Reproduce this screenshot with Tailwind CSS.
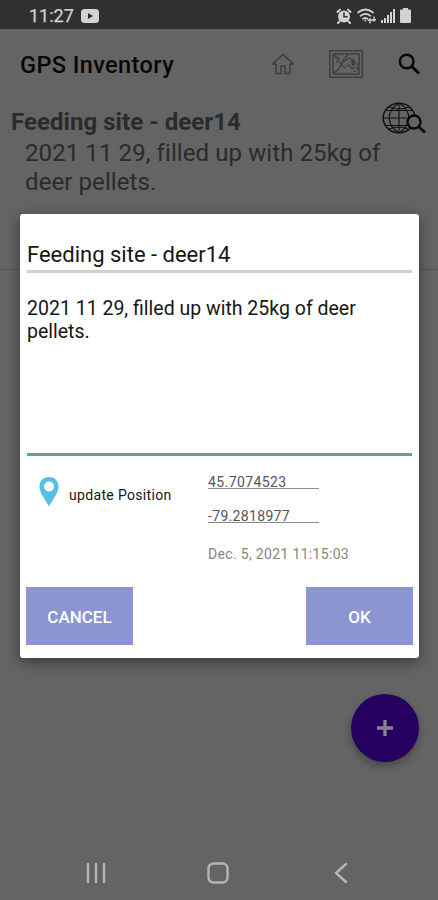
<!DOCTYPE html>
<html lang="en">
<head>
<meta charset="utf-8">
<title>GPS Inventory</title>
<script src="https://cdn.jsdelivr.net/npm/@tailwindcss/browser@4"></script>
</head>
<body class="bg-[#646464]">
<div class="relative flex h-[900px] w-[438px] flex-col overflow-hidden bg-[#646464] font-['Roboto',sans-serif]">
  <!-- Status bar -->
  <header class="flex h-[29px] shrink-0 items-center bg-[#303030] pt-[2px] pr-[27px] pl-[29px] text-[#d2d2d2]">
    <span class="w-[46px] text-[18px] leading-none font-normal whitespace-nowrap [-webkit-text-stroke:0.25px_currentColor]">11:27</span>
    <svg class="ml-[6px]" width="18" height="14" viewBox="0 0 18 14"><rect width="18" height="14" rx="3.5" fill="currentColor"/><path d="M7 4l5 3-5 3z" fill="#303030"/></svg>
    <div class="ml-auto flex items-center gap-[5px]">
      <svg width="16" height="16" viewBox="0 0 16 16" fill="none" stroke="currentColor" stroke-linecap="round"><circle cx="8" cy="8.5" r="6" fill="currentColor" stroke="none"/><path d="M1.500 4l2.500-2.400M14.500 4L12 1.600M3.500 13.500L2 15M12.500 13.500L14 15" stroke-width="2"/><path d="M8 5v3.700h3" stroke="#303030" stroke-width="1.500"/></svg>
      <svg width="19" height="16" viewBox="0 0 19 16" fill="none" stroke="currentColor" stroke-linecap="round" stroke-width="1.700"><path d="M1 4.500q7.500-6 15 0M3.500 7.800q5-4 10 0M6 10.800q2.500-2 4.500 0"/><circle cx="8.300" cy="12.500" r="1" fill="currentColor" stroke="none"/><path d="M13 15v-4m-1.500 1.500L13 11l1.500 1.500M17 9v4m-1.500-1.500L17 13l1.500-1.500" stroke-width="1.300"/></svg>
      <svg width="14" height="15" viewBox="0 0 14 15" fill="currentColor"><path d="M0 12h2v3H0zM3 10h2v5H3zM6 7h2v8H6zM9 4h2v11H9zM12 1h2v14h-2z"/></svg>
      <svg width="11" height="15" viewBox="0 0 11 15" fill="currentColor"><path d="M3 0h5v1.500h2q1 0 1 1V14q0 1-1 1H1q-1 0-1-1V2.500q0-1 1-1h2z"/></svg>
    </div>
  </header>

  <!-- App bar -->
  <nav class="flex h-[70px] shrink-0 items-center pr-[17px] pl-[20px]">
    <h1 class="pt-[3px] text-[23.5px] leading-none font-medium tracking-[0.4px] whitespace-nowrap text-[#080808]">GPS Inventory</h1>
    <div class="ml-auto flex items-center">
      <svg width="24" height="22" viewBox="0 0 24 22" fill="none" stroke="#3b3b3b" stroke-width="1.500" stroke-linejoin="round"><path d="M1.500 11L12 1.500 22.500 11H19v9.500h-5V13h-4v7.500H5V11z"/></svg>
      <svg class="ml-[34px]" width="34" height="28" viewBox="0 0 34 28" fill="none" stroke="#3b3b3b"><rect x=".75" y=".75" width="32.500" height="26.500" stroke-width="1.300"/><rect x="4" y="4" width="26" height="20" stroke-width="1.400"/><path d="M5 23q6-4 8-10t6-8M6 7l4 2-3 4M10 12l6 6M14 12l4-3 4-1M17 16l3-1 3 4 3-2M22 9l3 1 3 5" stroke-width="1.200"/><path d="M5 5l3 1-1 2zM22 9h2l2 6-3 1zM24 22l2-2 1 2zM27 18l2-2v5z" fill="#3b3b3b" stroke="none"/></svg>
      <svg class="ml-[35px]" width="23" height="22" viewBox="0 0 23 22" fill="none" stroke="#080808" stroke-width="2.400"><circle cx="8.700" cy="8.500" r="6.800"/><path d="M13.500 13.200l7.500 7.300" stroke-width="3"/></svg>
    </div>
  </nav>

  <!-- Inventory list -->
  <main class="relative h-[171px] shrink-0 border-b border-[#555] pt-[8px] pl-[11px] text-[#2b2b2b]">
    <h2 class="pt-px text-[24px] leading-[28px] font-bold tracking-[0.05px] whitespace-nowrap">Feeding site - deer14</h2>
    <p class="w-[380px] pt-[3px] pl-[14px] text-[24px] leading-[29px] tracking-[0.09px] whitespace-nowrap">2021 11 29, filled up with 25kg of<br>deer pellets.</p>
    <svg class="absolute top-[3px] right-[11px]" width="45" height="33" viewBox="0 0 45 33" fill="none" stroke="#111"><ellipse cx="17" cy="16" rx="15.800" ry="14.800" stroke-width="1.500"/><path d="M17 1v30M1 16h24M4 8.500h26M4 23.500h22M7 5q10 4 20 0M7 27q10-4 19 0" stroke-width="1.100"/><path d="M17 1C4 9 4 23 17 31M17 1c13 8 13 22 0 30" stroke-width="1.200"/><circle cx="32" cy="20" r="6.500" fill="#646464" stroke="#0c0c0c" stroke-width="2.400"/><path d="M36.500 24.500l6.500 6" stroke="#0c0c0c" stroke-width="2.600"/></svg>
  </main>

  <button class="absolute top-[694px] left-[351px] flex size-[68px] items-center justify-center rounded-full bg-[#250061] shadow-[0_4px_8px_rgba(0,0,0,0.3)]" aria-label="Add">
    <svg width="16" height="16" viewBox="0 0 16 16"><path d="M8 0v16M0 8h16" stroke="#858390" stroke-width="3.400"/></svg>
  </button>

  <!-- System navigation -->
  <footer class="mt-auto flex h-[55px] items-center pr-[90px] pl-[86px]">
    <svg width="20" height="22" viewBox="0 0 20 22" stroke="#b5b5b5" stroke-width="2.400" stroke-linecap="round"><path d="M2 2v18M10 2v18M18 2v18"/></svg>
    <svg class="ml-[101px]" width="22" height="22" viewBox="0 0 22 22" fill="none" stroke="#b5b5b5" stroke-width="2.400"><rect x="1.500" y="1.500" width="19" height="19" rx="5"/></svg>
    <svg class="ml-auto" width="14" height="22" viewBox="0 0 14 22" fill="none" stroke="#b5b5b5" stroke-width="2.400" stroke-linecap="round"><path d="M12 2L2 11l10 9"/></svg>
  </footer>

  <!-- Edit dialog -->
  <section class="absolute top-[214px] left-[20px] flex h-[444px] w-[399px] flex-col rounded-[3px] bg-white pr-[7px] pl-[7px] text-[#161616] shadow-[0_4px_14px_rgba(0,0,0,0.45)]">
    <div class="h-[59px] border-b-[3px] border-[#d0d0d0] pt-[27px] text-[22px] leading-[28px] whitespace-nowrap">Feeding site - deer14</div>
    <div class="h-[183px] border-b-[3px] border-[#61a394] pt-[24px] text-[19.5px] leading-[23px] whitespace-nowrap">2021 11 29, filled up with 25kg of deer<br>pellets.</div>
    <div class="flex h-[131px] shrink-0">
      <div class="flex w-[181px] pl-[12px]">
        <svg class="mt-[21px]" width="20" height="30" viewBox="0 0 20 30"><path fill="#55bfe6" fill-rule="evenodd" d="M10 0C4 0 .5 4.200.5 9.500.5 16 6 22 10 29.500 14 22 19.500 16 19.500 9.500 19.500 4.200 16 0 10 0zm0 4.500a5 5 0 110 10 5 5 0 010-10z"/></svg>
        <span class="mt-[30px] ml-[10px] text-[14px] leading-[18px] tracking-[0.33px] whitespace-nowrap">update Position</span>
      </div>
      <div class="flex flex-col text-[14px] text-[#555]">
        <div class="mt-[16px] h-[17px] w-[111px] border-b border-[#8c8c8c] leading-[21px] tracking-[0.4px]">45.7074523</div>
        <div class="mt-[17px] h-[17px] w-[111px] border-b border-[#8c8c8c] leading-[21px] tracking-[0.33px]">-79.2818977</div>
        <div class="mt-[22px] leading-[18px] tracking-[0.33px] whitespace-nowrap text-[#858585]">Dec. 5, 2021 11:15:03</div>
      </div>
    </div>
    <div class="-mx-px flex justify-between text-[17px] font-medium text-white">
      <button class="h-[58px] w-[107px] bg-[#8b95d1] pt-[3px]">CANCEL</button>
      <button class="h-[58px] w-[107px] bg-[#8b95d1] pt-[3px]">OK</button>
    </div>
  </section>
</div>
</body>
</html>
